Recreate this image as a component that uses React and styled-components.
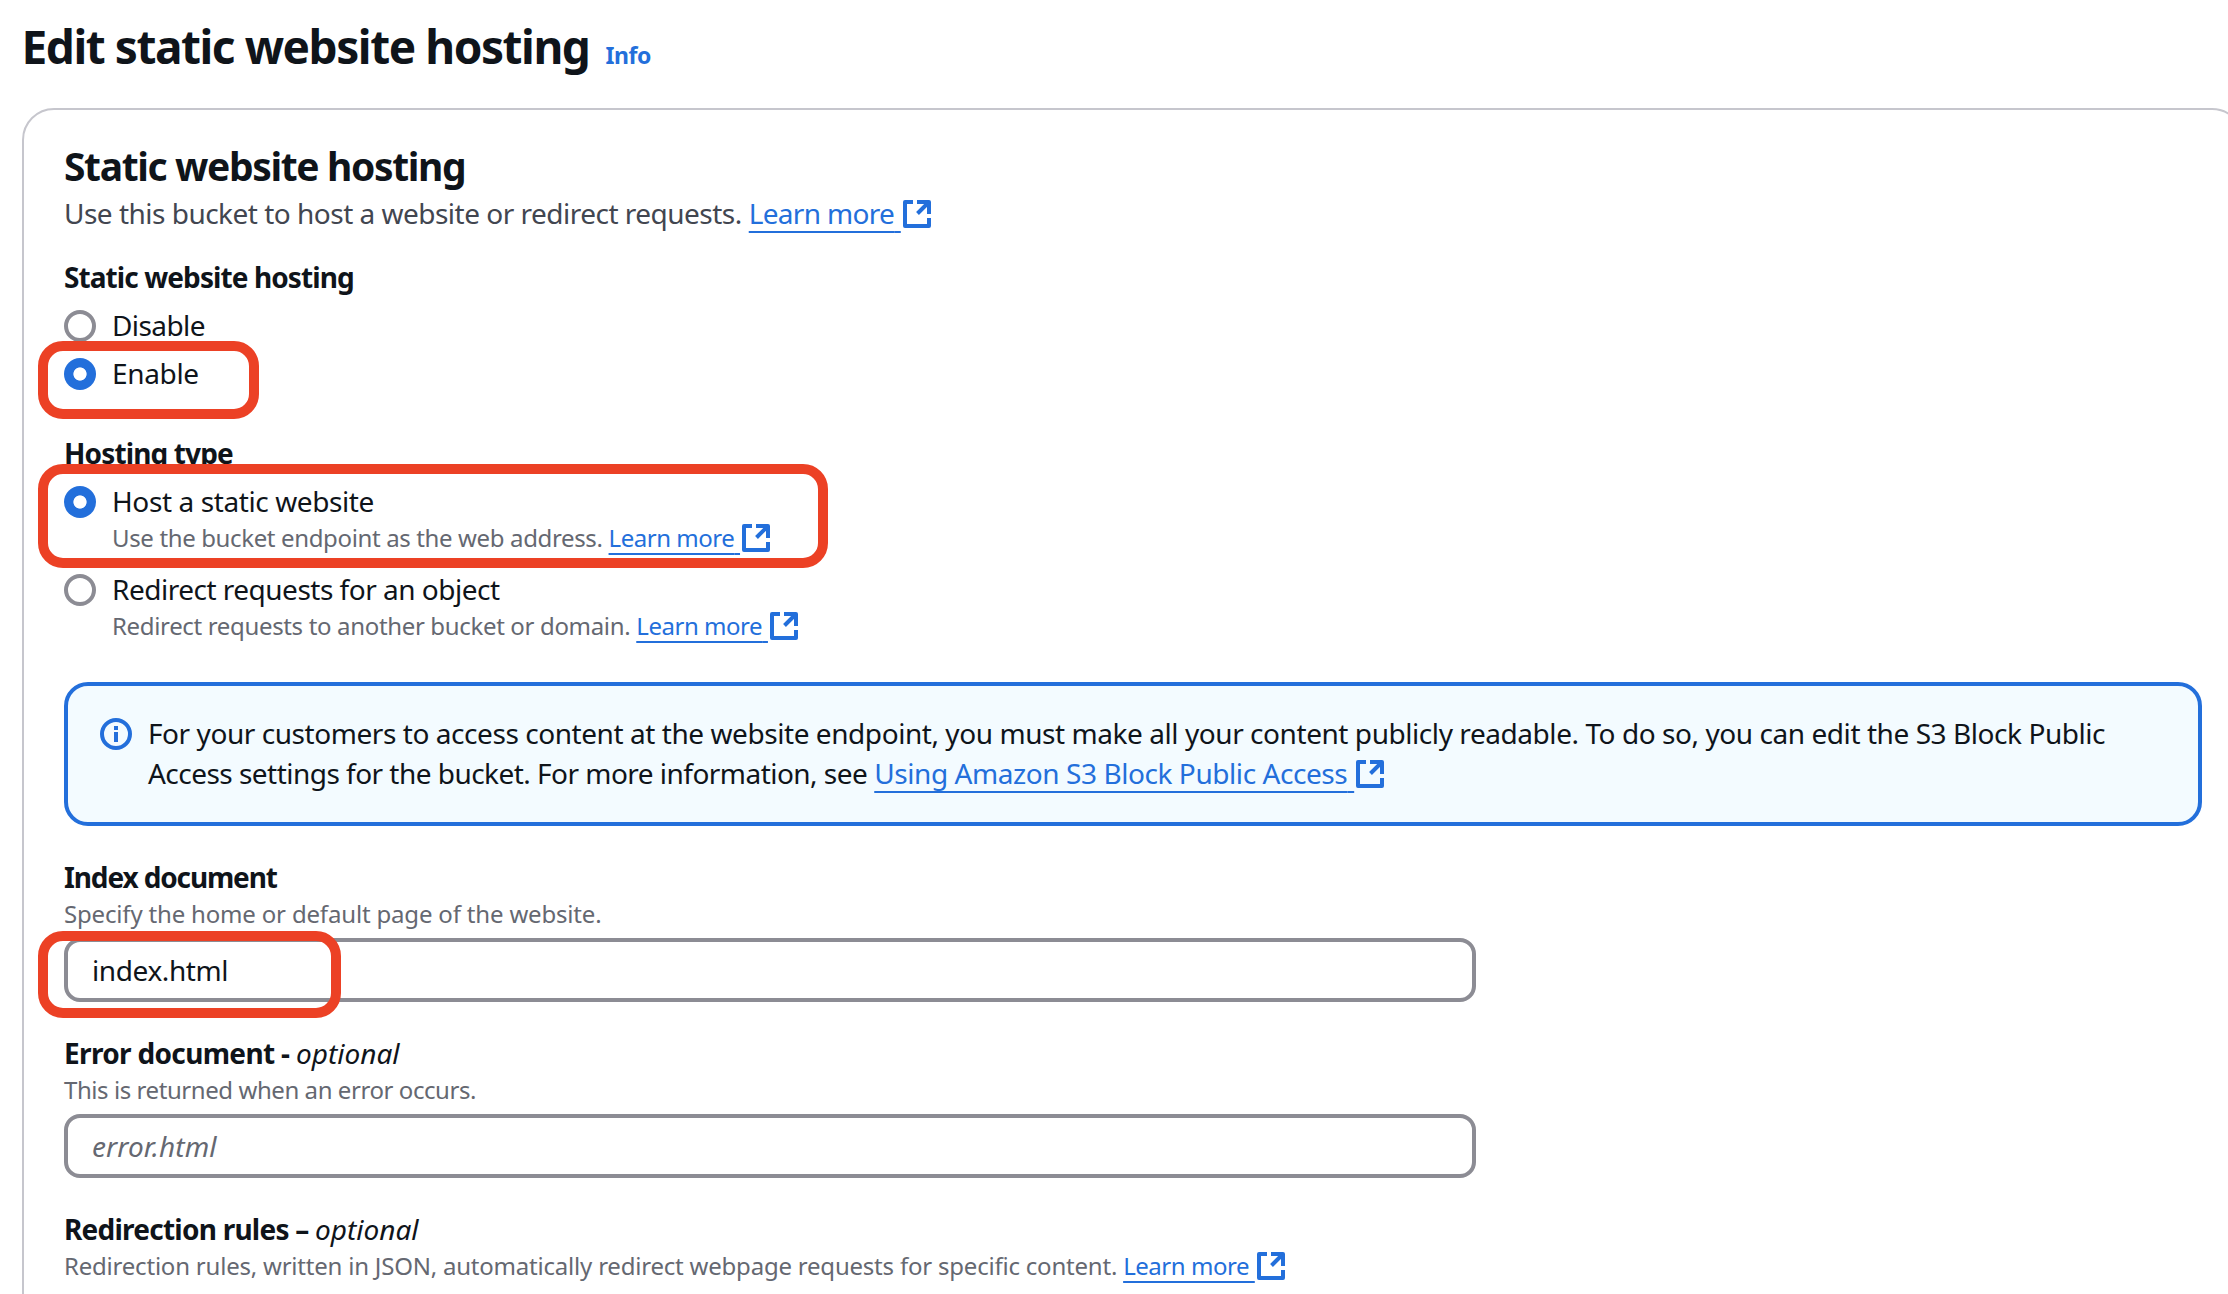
import React from "react";
import styled, { createGlobalStyle, css } from "styled-components";

const ink = "#0f141a";
const blue = "#236fdb";
const grey = "#656871";
const outline = "#8c8c94";
const mark = "#ec4125";

const GlobalStyle = createGlobalStyle`
  *, *::before, *::after { box-sizing: border-box; }
  body {
    margin: 0;
    background: #fff;
    color: ${ink};
    font-family: "Noto Sans", "Open Sans", sans-serif;
    font-kerning: normal;
  }
`;

const Page = styled.main`
  position: relative;
  width: 2228px;
  height: 1294px;
  overflow: hidden;
  padding: 16px 0 0 22px;
  font-size: 28px;
  line-height: 40px;
  white-space: nowrap;
`;

const TitleRow = styled.header`
  display: flex;
  align-items: baseline;
  margin: 0 0 32px -0.5px;
`;

const Title = styled.h1`
  margin: 0;
  font-size: 46px;
  line-height: 60px;
  font-weight: 700;
  letter-spacing: -1.45px;
`;

const InfoLink = styled.a`
  margin-left: 16px;
  color: ${blue};
  font-size: 23px;
  line-height: 32px;
  font-weight: 700;
  letter-spacing: -0.4px;
`;

const Card = styled.section`
  width: 2222px;
  height: 1240px;
  padding: 32px 40px;
  border: 2px solid #c6c6cd;
  border-radius: 32px;
`;

const CardTitle = styled.h2`
  margin: 0 0 3px;
  font-size: 39px;
  line-height: 48px;
  font-weight: 700;
  letter-spacing: -1.37px;
`;

const Lead = styled.p`
  margin: 0;
  color: #424650;
`;

const Track = styled.span`
  letter-spacing: ${(p) => p.$by}px;
`;

const Field = styled.div`
  display: flex;
  flex-direction: column;
  margin-top: ${(p) => p.$top}px;
`;

const Label = styled.div`
  font-weight: 700;
  em { font-weight: 400; }
`;

const Hint = styled.div`
  margin-top: 1px;
  color: ${grey};
  font-size: 24px;
  line-height: 32px;
`;

const Options = styled.div`
  display: flex;
  flex-direction: column;
  gap: 8px;
  margin-top: 8px;
`;

const Option = styled.label`
  display: grid;
  grid-template-columns: 32px 1fr;
  column-gap: 16px;
`;

const OptionNote = styled.div`
  grid-column: 2;
  height: 40px;
  padding-top: 1px;
  color: ${grey};
  font-size: 24px;
  line-height: 32px;
`;

const Radio = styled.span`
  width: 32px;
  height: 32px;
  margin-top: 5px;
  border: 4px solid ${outline};
  border-radius: 50%;
  background: #fff;
  ${(p) => p.$checked && css`
    border: none;
    background: radial-gradient(circle, #fff 6.2px, ${blue} 7px);
  `}
`;

const TextInput = styled.input`
  width: 1412px;
  height: 64px;
  margin: 8px 0 0;
  padding: 0 24px;
  border: 4px solid ${outline};
  border-radius: 16px;
  background: #fff;
  color: ${ink};
  font: 400 28px/40px "Noto Sans", "Open Sans", sans-serif;
  letter-spacing: ${(p) => p.$by}px;
  outline: none;
  &::placeholder { color: ${grey}; opacity: 1; font-style: italic; }
`;

const Alert = styled.div`
  display: flex;
  gap: 16px;
  width: 2138px;
  height: 144px;
  margin-top: 33px;
  padding: 27px 32px;
  border: 4px solid ${blue};
  border-radius: 24px;
  background: #f3fbff;
`;

const AlertIcon = styled.svg`
  flex: none;
  width: 32px;
  height: 32px;
  margin-top: 5px;
`;

const AlertText = styled.div`
  display: flex;
  flex-direction: column;
`;

const Anchor = styled.a`
  color: ${blue};
  margin-left: ${(p) => (p.$small ? 6 : 7)}px;
`;

const Underlined = styled.span`
  letter-spacing: ${(p) => p.$by}px;
  text-decoration: underline 2px;
  text-underline-offset: ${(p) => (p.$small ? 6 : 7)}px;
  text-decoration-skip-ink: none;
`;

const ExternalSvg = styled.svg`
  width: 28px;
  height: 28px;
  margin-left: 2px;
  vertical-align: ${(p) => (p.$small ? -5 : -4)}px;
`;

const Highlight = styled.div`
  position: absolute;
  left: 38px;
  top: ${(p) => p.$y}px;
  width: ${(p) => p.$w}px;
  height: ${(p) => p.$h}px;
  border: 10px solid ${mark};
  border-radius: 25px;
  pointer-events: none;
`;

function ExternalLink({ children, small, by }) {
  return (
    <Anchor $small={small}>
      <Underlined $small={small} $by={by}>{children}{"\u00a0"}</Underlined>
      <ExternalSvg $small={small} viewBox="0 0 28 28" fill="none" stroke={blue} strokeWidth="4" strokeLinejoin="round">
        <path d="M10 2H2v24h24v-8M14 2h12v12M26 2 14.5 13.5" />
      </ExternalSvg>
    </Anchor>
  );
}

function RadioOption({ label, by, checked, children }) {
  return (
    <Option>
      <Radio $checked={checked} />
      <Track $by={by}>{label}</Track>
      {children && <OptionNote>{children}</OptionNote>}
    </Option>
  );
}

export default function App() {
  return (
    <>
      <GlobalStyle />
      <Page>
        <TitleRow>
          <Title>Edit static website hosting</Title>
          <InfoLink>Info</InfoLink>
        </TitleRow>
        <Card>
          <CardTitle>Static website hosting</CardTitle>
          <Lead>
            <Track $by={-0.51}>Use this bucket to host a website or redirect requests.</Track>
            <ExternalLink by={-0.68}>Learn more</ExternalLink>
          </Lead>

          <Field $top={24}>
            <Label><Track $by={-0.91}>Static website hosting</Track></Label>
            <Options>
              <RadioOption label="Disable" by={-0.6} />
              <RadioOption label="Enable" by={-0.35} checked />
            </Options>
          </Field>

          <Field $top={40}>
            <Label><Track $by={-0.86}>Hosting type</Track></Label>
            <Options>
              <RadioOption label="Host a static website" by={-0.4} checked>
                <Track $by={-0.36}>Use the bucket endpoint as the web address.</Track>
                <ExternalLink small by={-0.48}>Learn more</ExternalLink>
              </RadioOption>
              <RadioOption label="Redirect requests for an object" by={-0.5}>
                <Track $by={-0.34}>Redirect requests to another bucket or domain.</Track>
                <ExternalLink small by={-0.46}>Learn more</ExternalLink>
              </RadioOption>
            </Options>
          </Field>

          <Alert>
            <AlertIcon viewBox="0 0 32 32">
              <circle cx="16" cy="16" r="14" fill="none" stroke={blue} strokeWidth="4" />
              <path d="M14 8h4v4h-4zM14 14h4v10h-4z" fill={blue} />
            </AlertIcon>
            <AlertText>
              <Track $by={-0.438}>
                For your customers to access content at the website endpoint, you must make all your content publicly readable. To do so, you can edit the S3 Block Public
              </Track>
              <div>
                <Track $by={-0.53}>Access settings for the bucket. For more information, see</Track>
                <ExternalLink by={-0.43}>Using Amazon S3 Block Public Access</ExternalLink>
              </div>
            </AlertText>
          </Alert>

          <Field $top={31}>
            <Label><Track $by={-1.13}>Index document</Track></Label>
            <Hint><Track $by={-0.176}>Specify the home or default page of the website.</Track></Hint>
            <TextInput $by={-0.4} defaultValue="index.html" />
          </Field>

          <Field $top={31}>
            <Label><Track $by={-0.66}>Error document - </Track><em>optional</em></Label>
            <Hint><Track $by={-0.43}>This is returned when an error occurs.</Track></Hint>
            <TextInput $by={0.1} placeholder="error.html" />
          </Field>

          <Field $top={31}>
            <Label><Track $by={-0.76}>Redirection rules – </Track><em>optional</em></Label>
            <Hint>
              <Track $by={-0.21}>Redirection rules, written in JSON, automatically redirect webpage requests for specific content.</Track>
              <ExternalLink small by={-0.46}>Learn more</ExternalLink>
            </Hint>
          </Field>
        </Card>

        <Highlight $y={341} $w={221} $h={78} />
        <Highlight $y={464} $w={790} $h={104} />
        <Highlight $y={931} $w={303} $h={87} />
      </Page>
    </>
  );
}
